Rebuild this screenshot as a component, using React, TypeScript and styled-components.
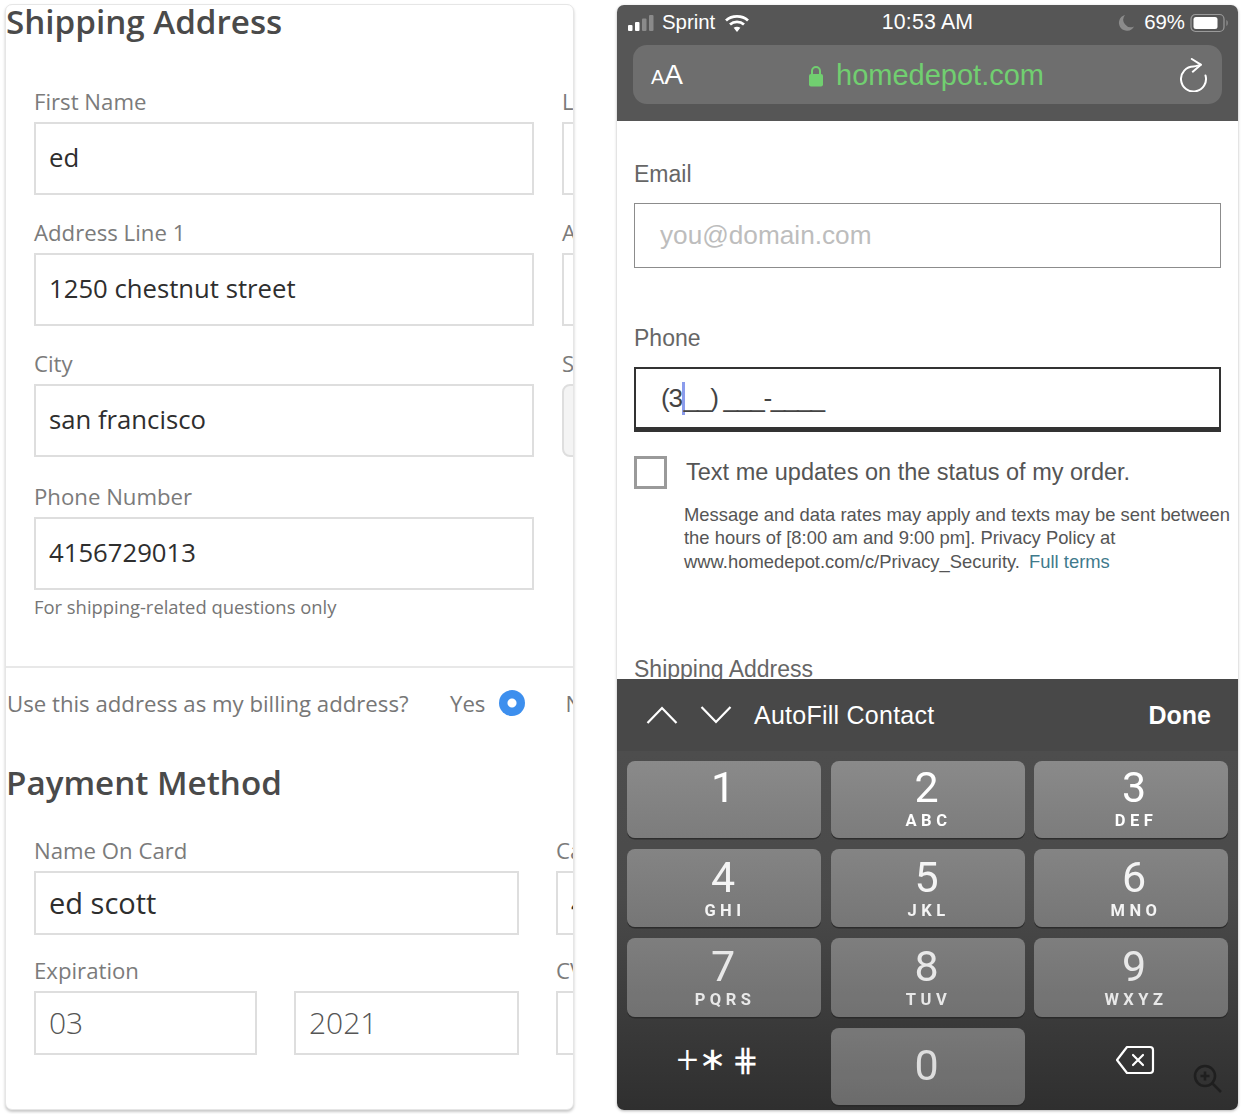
import React from 'react';
import styled, { createGlobalStyle } from 'styled-components';

const GlobalStyle = createGlobalStyle`
  html, body {
    margin: 0;
    padding: 0;
    background: #ffffff;
  }
  * { box-sizing: border-box; }
`;

const Page = styled.div`
  display: flex;
  align-items: flex-start;
  gap: 43px;
  width: 1242px;
  height: 1114px;
  padding: 4px 0 0 5px;
  overflow: hidden;
`;

// --- left: checkout form ---

const FormCard = styled.section`
  width: 569px;
  height: 1106px;
  flex: none;
  overflow: hidden;
  background: #fff;
  border: 1px solid #e6e6e6;
  border-radius: 7px;
  box-shadow: 0 2px 3px rgba(0, 0, 0, 0.22);
  font-family: "Open Sans", sans-serif;
  color: #777;
`;

const Heading = styled.h2<{ $before?: number; $after: number }>`
  margin: ${(p) => p.$before ?? 0}px 0 ${(p) => p.$after}px;
  height: 33px;
  line-height: 33px;
  font-size: 33.2px;
  font-weight: 600;
  color: #4a4a4a;
  white-space: nowrap;
`;

const FieldRow = styled.div<{ $first?: number; $gap?: number; $after?: number }>`
  display: grid;
  grid-template-columns: ${(p) => p.$first ?? 500}px 500px;
  column-gap: ${(p) => p.$gap ?? 28}px;
  margin: 0 0 ${(p) => p.$after ?? 26}px 28px;
  width: 1100px;
`;

const Field = styled.div`
  min-width: 0;
`;

const FieldLabel = styled.label`
  display: block;
  height: 32px;
  line-height: 24px;
  font-size: 22.2px;
  color: #7b7b7b;
  white-space: nowrap;
`;

const TextBox = styled.input<{ $size?: 'large' | 'muted'; $shaded?: boolean }>`
  display: block;
  width: 100%;
  height: ${(p) => (p.$size ? 64 : 73)}px;
  padding: 0 13px ${(p) => (p.$size === 'muted' ? 1 : 2)}px;
  border: 2px solid #dedede;
  border-radius: ${(p) => (p.$shaded ? '8px' : '0')};
  background: ${(p) => (p.$shaded ? '#f4f4f4' : '#fff')};
  font-family: "Open Sans", sans-serif;
  font-size: ${(p) => (p.$size === 'muted' ? 30 : p.$size === 'large' ? 29 : 25.7)}px;
  font-weight: ${(p) => (p.$size === 'muted' ? 300 : 400)};
  color: ${(p) => (p.$size === 'muted' ? '#555' : '#2e2e2e')};
  outline: none;
`;

const ExpiryPair = styled.div`
  display: grid;
  grid-template-columns: 223px 225px;
  column-gap: 37px;
`;

const Hint = styled.p`
  margin: -22px 0 0 28px;
  height: 26px;
  line-height: 26px;
  font-size: 18.4px;
  color: #757575;
`;

const Divider = styled.hr`
  margin: 46px 0 0;
  border: 0;
  border-top: 2px solid #e8e8e8;
`;

const BillingRow = styled.div`
  display: flex;
  align-items: center;
  height: 40px;
  margin: 15px 0 0 1px;
  font-size: 22.2px;
  color: #777;
  white-space: nowrap;
`;

const BillingQuestion = styled.span`
  width: 443px;
  flex: none;
`;

const Radio = styled.span`
  width: 26px;
  height: 26px;
  margin: 0 40px 0 14px;
  flex: none;
  border-radius: 50%;
  background: radial-gradient(circle, #fff 0 4px, #3d8fee 5px);
`;

// --- right: phone ---

const Phone = styled.section`
  position: relative;
  width: 621px;
  height: 1105px;
  flex: none;
  margin-top: 1px;
  overflow: hidden;
  display: flex;
  flex-direction: column;
  background: #fff;
  border-radius: 7px;
  box-shadow: 0 1px 3px rgba(0, 0, 0, 0.3);
  font-family: "Liberation Sans", sans-serif;
`;

const BrowserChrome = styled.header`
  height: 116px;
  flex: none;
  padding: 0 16px;
  background: #565656;
  color: #fff;
`;

const StatusBar = styled.div`
  display: grid;
  grid-template-columns: 1fr auto 1fr;
  align-items: center;
  height: 34px;
  margin: 0 -8px 6px -6px;
  padding-top: 1px;
  font-size: 20.4px;
`;

const StatusGroup = styled.div<{ $end?: boolean }>`
  display: flex;
  align-items: center;
  justify-content: ${(p) => (p.$end ? 'flex-end' : 'flex-start')};
  gap: ${(p) => (p.$end ? 5 : 7)}px;
`;

const Clock = styled.span`
  margin-right: 2px;
  font-size: 21.3px;
  letter-spacing: 0.2px;
`;

const UrlBar = styled.div`
  display: flex;
  align-items: center;
  justify-content: space-between;
  height: 59px;
  padding: 0 14px 0 18px;
  border-radius: 14px;
  background: #6e6e6e;
`;

const TextSize = styled.span`
  font-size: 28px;
  line-height: 1;
  & small { font-size: 20px; }
`;

const Domain = styled.span`
  display: flex;
  align-items: center;
  gap: 12px;
  margin: 2px 11px 0 0;
  font-size: 29px;
  color: #71cf70;
`;

const PhoneForm = styled.div`
  height: 558px;
  flex: none;
  overflow: hidden;
  padding: 39px 17px 0;
  color: #555;
`;

const PhoneLabel = styled.div`
  height: 43px;
  line-height: 28px;
  font-size: 23px;
  color: #666;
`;

const PhoneBox = styled.div<{ $active?: boolean }>`
  display: flex;
  align-items: center;
  width: 587px;
  height: 65px;
  margin-bottom: ${(p) => (p.$active ? 24 : 56)}px;
  padding: 0 25px;
  border-style: solid;
  border-color: ${(p) => (p.$active ? '#333' : '#8c8c8c')};
  border-width: ${(p) => (p.$active ? '2px 2px 5px' : '1.5px')};
  font-size: 26.2px;
  letter-spacing: ${(p) => (p.$active ? '-1.3px' : '0')};
  color: ${(p) => (p.$active ? '#444' : '#bdbdbd')};
  white-space: pre;
`;

const Caret = styled.span`
  display: inline-block;
  width: 3px;
  height: 33px;
  margin-right: -1px;
  background: #8b9cec;
`;

const ConsentRow = styled.div`
  display: flex;
  align-items: center;
  gap: 19px;
  height: 33px;
  font-size: 23.5px;
  color: #555;
`;

const CheckBox = styled.span`
  width: 33px;
  height: 33px;
  flex: none;
  border: 3px solid #9a9a9a;
`;

const Fine = styled.p`
  margin: 13.5px 0 0 50px;
  width: 560px;
  line-height: 23.5px;
  font-size: 18.4px;
  color: #555;
  white-space: nowrap;
  & a { margin-left: 4px; color: #3f7a8c; text-decoration: none; }
`;

const ClippedLabel = styled(PhoneLabel)`
  margin-top: 82px;
`;

const Keyboard = styled.div`
  flex: 1;
  background: linear-gradient(#505050 72px, #4d4d4d 72px, #4a4a4a 50%, #2f2f2f);
  color: #fff;
`;

const AccessoryBar = styled.div`
  display: flex;
  align-items: center;
  height: 72px;
  padding: 0 27px 0 29px;
  background: #484848;
  font-size: 25px;
`;

const ChevronGroup = styled.div`
  display: flex;
  gap: 22px;
  margin-right: 22px;
`;

const AutoFill = styled.span`
  flex: 1;
  letter-spacing: 0.25px;
`;

const Done = styled.span`
  font-weight: 700;
  font-size: 25px;
`;

const KeyGrid = styled.div`
  display: grid;
  grid-template-columns: 194px 194px 194px;
  grid-template-rows: 77px 78px 79px 77px;
  column-gap: 9.5px;
  row-gap: 11px;
  padding: 10px 0 0 10px;
`;

const Key = styled.div<{ $row: number; $col: number }>`
  display: flex;
  flex-direction: column;
  align-items: center;
  padding: ${(p) => (p.$col === 2 ? '0 0 0 6px' : '0 2px 0 0')};
  border-radius: 8px;
  background: linear-gradient(#8a8a8a, #7c7c7c);
  box-shadow: 0 1.5px 0 #2e2e2e;
  filter: brightness(${(p) => 1 - p.$row * 0.045});
  font-family: Roboto, sans-serif;
`;

const Digit = styled.span<{ $top: number }>`
  height: 46px;
  margin-top: ${(p) => p.$top}px;
  line-height: 46px;
  font-size: 43px;
  font-weight: 400;
`;

const Letters = styled.span`
  line-height: 18px;
  margin-top: 2px;
  font-size: 16.5px;
  font-weight: 700;
  letter-spacing: 4.5px;
  padding-left: 4px;
`;

const FlatKey = styled.div<{ $nudge: number }>`
  display: flex;
  align-items: center;
  justify-content: center;
  gap: 6px;
  padding-bottom: 13px;
  padding-left: ${(p) => Math.max(p.$nudge, 0)}px;
  padding-right: ${(p) => Math.max(-p.$nudge, 0)}px;
`;

const Sym = styled.span<{ $size: number; $turn?: boolean }>`
  font-family: Roboto, "DejaVu Sans", sans-serif;
  font-size: ${(p) => p.$size}px;
  font-weight: 300;
  line-height: 1;
  transform: ${(p) => (p.$turn ? 'rotate(90deg)' : 'none')};
`;

const ZoomBadge = styled.span`
  position: absolute;
  right: 15px;
  bottom: 16px;
  display: flex;
`;

const WifiSvg = styled.svg`
  margin-left: 2px;
`;

const MoonSvg = styled.svg`
  margin-right: 4px;
`;

// --- icons ---

const SignalIcon = () => (
  <svg width="28" height="18" viewBox="0 0 28 18">
    <rect x="1" y="11" width="4.5" height="6" rx="1" fill="#fff" />
    <rect x="8" y="8" width="4.5" height="9" rx="1" fill="#fff" />
    <rect x="15" y="4.5" width="4.5" height="12.5" rx="1" fill="#8a8a8a" />
    <rect x="22" y="1" width="4.5" height="16" rx="1" fill="#8a8a8a" />
  </svg>
);

const WifiIcon = () => (
  <WifiSvg width="26" height="20" viewBox="0 0 26 20" fill="none" stroke="#fff" strokeWidth="2.8">
    <path d="M2 7.5C8 2 18 2 24 7.5" />
    <path d="M6 11.5c4-3.5 10-3.5 14 0" />
    <path d="M13 19l-3.4-4.2c2-1.4 4.8-1.4 6.8 0z" fill="#fff" stroke="none" />
  </WifiSvg>
);

const MoonIcon = () => (
  <MoonSvg width="17" height="18" viewBox="0 0 17 18">
    <path d="M7 1a8 8 0 1 0 9 11.5A7.5 7.5 0 0 1 7 1z" fill="#8b8b8b" />
  </MoonSvg>
);

const BatteryIcon = () => (
  <svg width="40" height="20" viewBox="0 0 40 20">
    <rect x="1" y="1.5" width="33" height="17" rx="4.5" fill="none" stroke="#9a9a9a" strokeWidth="1.2" />
    <rect x="3.5" y="4" width="24" height="12" rx="2.5" fill="#fff" />
    <path d="M36.5 7c1.5.5 1.5 5.500 0 6z" fill="#9a9a9a" />
  </svg>
);

const LockIcon = () => (
  <svg width="16" height="22" viewBox="0 0 16 22">
    <path d="M4 10V6a4 4 0 0 1 8 0v4" fill="none" stroke="#71cf70" strokeWidth="2" />
    <rect x="1" y="9" width="14" height="12.5" rx="2" fill="#71cf70" />
  </svg>
);

const ReloadIcon = () => (
  <svg width="28" height="34" viewBox="0 0 28 34" fill="none" stroke="#fff" strokeWidth="2" strokeLinecap="round" strokeLinejoin="round">
    <path d="M20.8 6.7C18 7.5 16 8.5 13.5 8.5A12.5 12.5 0 1 0 25.5 17.5" />
    <path d="M11.8 1l9 5.7-8 7" />
  </svg>
);

const Chevron = ({ up }: { up?: boolean }) => (
  <svg width="32" height="20" viewBox="0 0 32 20" fill="none" stroke="#fff" strokeWidth="2.2">
    <path d={up ? 'M1.5 18L16 3l14.5 15' : 'M1.5 2L16 17 30.5 2'} />
  </svg>
);

const BackspaceIcon = () => (
  <svg width="40" height="30" viewBox="0 0 40 30" fill="none" stroke="#fff" strokeWidth="2.2" strokeLinejoin="round">
    <path d="M12 2h23a3 3 0 0 1 3 3v20a3 3 0 0 1-3 3H12L2 15z" />
    <path d="M18 10l10 10M28 10L18 20" strokeLinecap="round" />
  </svg>
);

const ZoomIcon = () => (
  <svg width="30" height="30" viewBox="0 0 30 30" fill="none" stroke="#1f1f1f" strokeWidth="2.6">
    <circle cx="12" cy="12" r="10" />
    <path d="M19 19l9 9M12 7.5v9M7.5 12h9" />
  </svg>
);

const keys = [
  { digit: '1', letters: '' },
  { digit: '2', letters: 'ABC' },
  { digit: '3', letters: 'DEF' },
  { digit: '4', letters: 'GHI' },
  { digit: '5', letters: 'JKL' },
  { digit: '6', letters: 'MNO' },
  { digit: '7', letters: 'PQRS' },
  { digit: '8', letters: 'TUV' },
  { digit: '9', letters: 'WXYZ' },
];

export default function App() {
  return (
    <>
      <GlobalStyle />
      <Page>
        <FormCard>
          <Heading $after={52}>Shipping Address</Heading>

          <FieldRow>
            <Field>
              <FieldLabel>First Name</FieldLabel>
              <TextBox readOnly defaultValue="ed" />
            </Field>
            <Field>
              <FieldLabel>Last Name</FieldLabel>
              <TextBox readOnly />
            </Field>
          </FieldRow>
          <FieldRow>
            <Field>
              <FieldLabel>Address Line 1</FieldLabel>
              <TextBox readOnly defaultValue="1250 chestnut street" />
            </Field>
            <Field>
              <FieldLabel>Address Line 2</FieldLabel>
              <TextBox readOnly />
            </Field>
          </FieldRow>
          <FieldRow $after={28}>
            <Field>
              <FieldLabel>City</FieldLabel>
              <TextBox readOnly defaultValue="san francisco" />
            </Field>
            <Field>
              <FieldLabel>State</FieldLabel>
              <TextBox readOnly $shaded />
            </Field>
          </FieldRow>
          <FieldRow>
            <Field>
              <FieldLabel>Phone Number</FieldLabel>
              <TextBox readOnly defaultValue="4156729013" />
            </Field>
          </FieldRow>
          <Hint>For shipping-related questions only</Hint>

          <Divider />

          <BillingRow>
            <BillingQuestion>Use this address as my billing address?</BillingQuestion>
            Yes
            <Radio />
            No
          </BillingRow>

          <Heading $before={43} $after={40}>Payment Method</Heading>

          <FieldRow $first={485} $gap={37} $after={24}>
            <Field>
              <FieldLabel>Name On Card</FieldLabel>
              <TextBox readOnly $size="large" defaultValue="ed scott" />
            </Field>
            <Field>
              <FieldLabel>Card Number</FieldLabel>
              <TextBox readOnly $size="large" defaultValue="4111" />
            </Field>
          </FieldRow>
          <FieldRow $first={485} $gap={37}>
            <Field>
              <FieldLabel>Expiration</FieldLabel>
              <ExpiryPair>
                <TextBox readOnly $size="muted" defaultValue="03" />
                <TextBox readOnly $size="muted" defaultValue="2021" />
              </ExpiryPair>
            </Field>
            <Field>
              <FieldLabel>CVV</FieldLabel>
              <TextBox readOnly $size="large" />
            </Field>
          </FieldRow>
        </FormCard>

        <Phone>
          <BrowserChrome>
            <StatusBar>
              <StatusGroup>
                <SignalIcon />
                <span>Sprint</span>
                <WifiIcon />
              </StatusGroup>
              <Clock>10:53 AM</Clock>
              <StatusGroup $end>
                <MoonIcon />
                <span>69%</span>
                <BatteryIcon />
              </StatusGroup>
            </StatusBar>
            <UrlBar>
              <TextSize><small>A</small>A</TextSize>
              <Domain><LockIcon />homedepot.com</Domain>
              <ReloadIcon />
            </UrlBar>
          </BrowserChrome>

          <PhoneForm>
            <PhoneLabel>Email</PhoneLabel>
            <PhoneBox>you@domain.com</PhoneBox>
            <PhoneLabel>Phone</PhoneLabel>
            <PhoneBox $active>(3<Caret />__) ___-____</PhoneBox>
            <ConsentRow>
              <CheckBox />
              Text me updates on the status of my order.
            </ConsentRow>
            <Fine>
              Message and data rates may apply and texts may be sent between<br />
              the hours of [8:00 am and 9:00 pm]. Privacy Policy at<br />
              www.homedepot.com/c/Privacy_Security. <a href="#terms">Full terms</a>
            </Fine>
            <ClippedLabel>Shipping Address</ClippedLabel>
          </PhoneForm>

          <Keyboard>
            <AccessoryBar>
              <ChevronGroup>
                <Chevron up />
                <Chevron />
              </ChevronGroup>
              <AutoFill>AutoFill Contact</AutoFill>
              <Done>Done</Done>
            </AccessoryBar>
            <KeyGrid>
              {keys.map((k, i) => {
                const row = Math.floor(i / 3);
                return (
                  <Key key={k.digit} $row={row} $col={i % 3}>
                    <Digit $top={row === 0 ? 3 : 5}>{k.digit}</Digit>
                    {k.letters && <Letters>{k.letters}</Letters>}
                  </Key>
                );
              })}
              <FlatKey $nudge={-12}>
                <Sym $size={38}>+</Sym>
                <Sym $size={36} $turn>⚹</Sym>
                <Sym $size={32}>⋕</Sym>
              </FlatKey>
              <Key $row={3} $col={1}>
                <Digit $top={14}>0</Digit>
              </Key>
              <FlatKey $nudge={8}>
                <BackspaceIcon />
              </FlatKey>
            </KeyGrid>
          </Keyboard>

          <ZoomBadge>
            <ZoomIcon />
          </ZoomBadge>
        </Phone>
      </Page>
    </>
  );
}
